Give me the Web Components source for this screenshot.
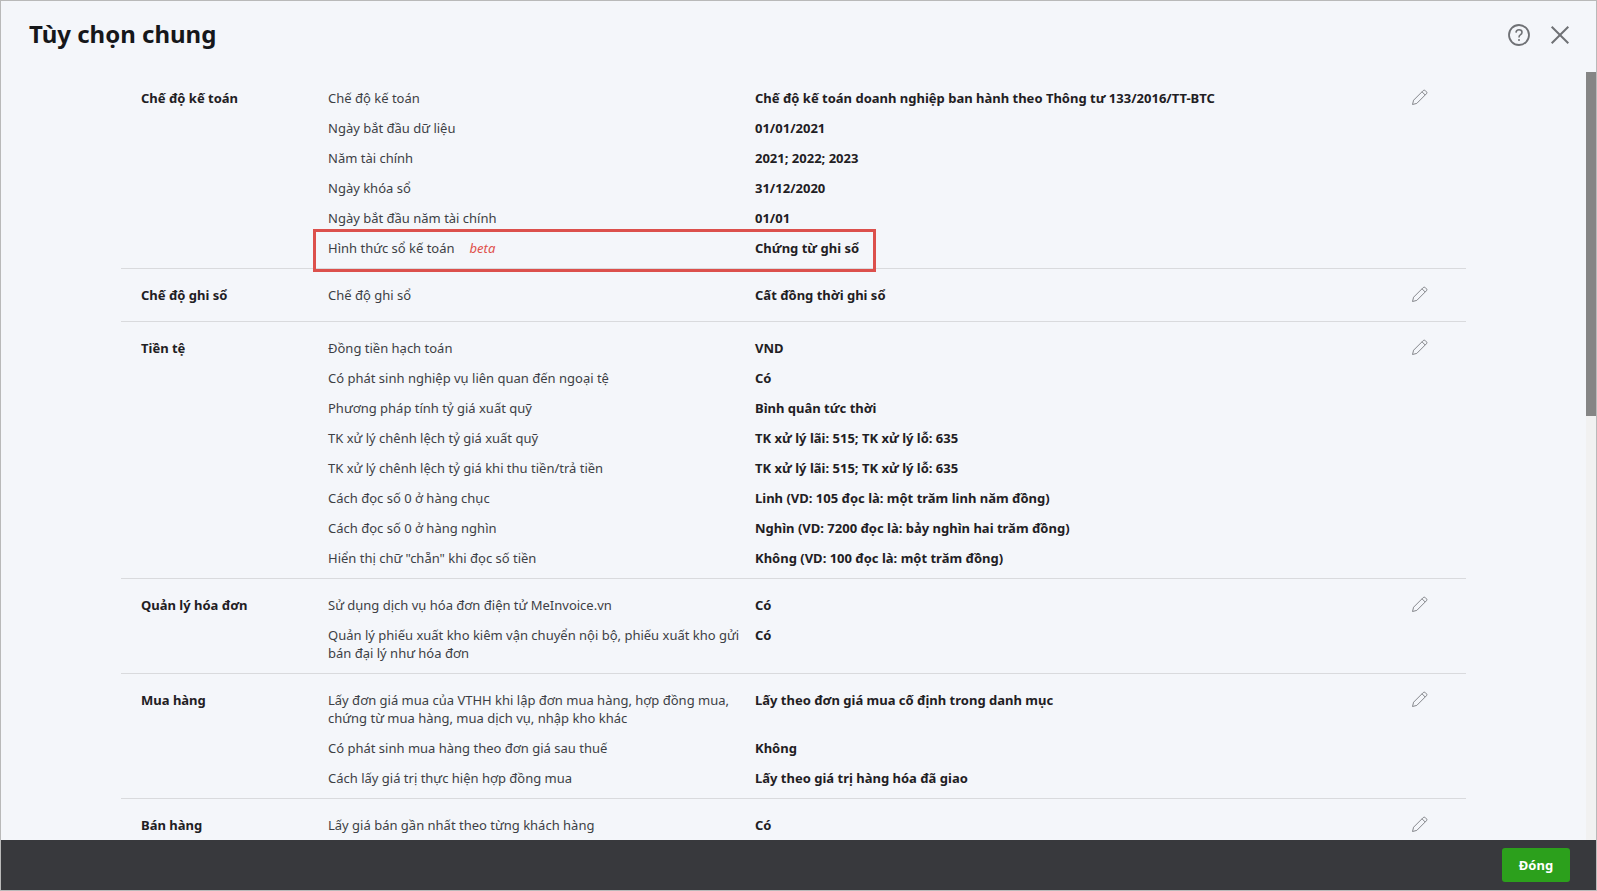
<!DOCTYPE html>
<html lang="vi">
    <head>
        <meta charset="utf-8"/>
        <title>Tùy chọn chung</title>
        <style>
            html, body { margin: 0; height: 100%; overflow: hidden; }
        </style>
    </head>
    <body>
        <option-dialog heading="Tùy chọn chung">
            <option-group name="Chế độ kế toán">
                <option-row label="Chế độ kế toán" value="Chế độ kế toán doanh nghiệp ban hành theo Thông tư 133/2016/TT-BTC"></option-row>
                <option-row label="Ngày bắt đầu dữ liệu" value="01/01/2021"></option-row>
                <option-row label="Năm tài chính" value="2021; 2022; 2023"></option-row>
                <option-row label="Ngày khóa sổ" value="31/12/2020"></option-row>
                <option-row label="Ngày bắt đầu năm tài chính" value="01/01"></option-row>
                <option-row label="Hình thức sổ kế toán" value="Chứng từ ghi sổ" note="beta" highlight></option-row>
            </option-group>
            <option-group name="Chế độ ghi sổ">
                <option-row label="Chế độ ghi sổ" value="Cất đồng thời ghi sổ"></option-row>
            </option-group>
            <option-group name="Tiền tệ">
                <option-row label="Đồng tiền hạch toán" value="VND"></option-row>
                <option-row label="Có phát sinh nghiệp vụ liên quan đến ngoại tệ" value="Có"></option-row>
                <option-row label="Phương pháp tính tỷ giá xuất quỹ" value="Bình quân tức thời"></option-row>
                <option-row label="TK xử lý chênh lệch tỷ giá xuất quỹ" value="TK xử lý lãi: 515; TK xử lý lỗ: 635"></option-row>
                <option-row label="TK xử lý chênh lệch tỷ giá khi thu tiền/trả tiền" value="TK xử lý lãi: 515; TK xử lý lỗ: 635"></option-row>
                <option-row label="Cách đọc số 0 ở hàng chục" value="Linh (VD: 105 đọc là: một trăm linh năm đồng)"></option-row>
                <option-row label="Cách đọc số 0 ở hàng nghìn" value="Nghìn (VD: 7200 đọc là: bảy nghìn hai trăm đồng)"></option-row>
                <option-row label="Hiển thị chữ &quot;chẵn&quot; khi đọc số tiền" value="Không (VD: 100 đọc là: một trăm đồng)"></option-row>
            </option-group>
            <option-group name="Quản lý hóa đơn">
                <option-row label="Sử dụng dịch vụ hóa đơn điện tử MeInvoice.vn" value="Có"></option-row>
                <option-row label="Quản lý phiếu xuất kho kiêm vận chuyển nội bộ, phiếu xuất kho gửi bán đại lý như hóa đơn" value="Có"></option-row>
            </option-group>
            <option-group name="Mua hàng">
                <option-row label="Lấy đơn giá mua của VTHH khi lập đơn mua hàng, hợp đồng mua, chứng từ mua hàng, mua dịch vụ, nhập kho khác" value="Lấy theo đơn giá mua cố định trong danh mục"></option-row>
                <option-row label="Có phát sinh mua hàng theo đơn giá sau thuế" value="Không"></option-row>
                <option-row label="Cách lấy giá trị thực hiện hợp đồng mua" value="Lấy theo giá trị hàng hóa đã giao"></option-row>
            </option-group>
            <option-group name="Bán hàng" last>
                <option-row label="Lấy giá bán gần nhất theo từng khách hàng" value="Có"></option-row>
            </option-group>
        </option-dialog>

        <script>
            class OptionRow extends HTMLElement {
                constructor() {
                    super();
                    let shadowDom = this.attachShadow({mode: 'open'});
                    const note = this.getAttribute("note");
                    shadowDom.innerHTML = `
                        <style>
                            :host {
                                display: grid;
                                grid-template-columns: 427px 1fr;
                                padding: 6px 0;
                                position: relative;
                                line-height: 18px;
                            }
                            .label { color: #3d3f45; padding-right: 12px; }
                            .note { color: #e0504b; font-style: italic; margin-left: 15px; }
                            .value { color: #1f2023; font-weight: 700; }
                            .box {
                                position: absolute;
                                left: -15px;
                                top: -4px;
                                width: 563px;
                                height: 43px;
                                box-sizing: border-box;
                                border: 3px solid #dc504c;
                            }
                        </style>
                        <div class="label"></div>
                        <div class="value"></div>
                    `;
                    const labelEl = shadowDom.querySelector(".label");
                    labelEl.textContent = this.getAttribute("label");
                    if (note) {
                        const noteEl = document.createElement("span");
                        noteEl.className = "note";
                        noteEl.textContent = note;
                        labelEl.appendChild(noteEl);
                    }
                    shadowDom.querySelector(".value").textContent = this.getAttribute("value");
                    if (this.hasAttribute("highlight")) {
                        const box = document.createElement("div");
                        box.className = "box";
                        shadowDom.appendChild(box);
                    }
                }
            }
            window.customElements.define("option-row", OptionRow);

            class OptionGroup extends HTMLElement {
                constructor() {
                    super();
                    let shadowDom = this.attachShadow({mode: 'open'});
                    shadowDom.innerHTML = `
                        <style>
                            :host {
                                display: grid;
                                grid-template-columns: 187px 1fr 55px;
                                box-sizing: border-box;
                                min-height: 53px;
                                padding: 11px 0 5px 20px;
                                border-bottom: 1px solid #d9dadd;
                            }
                            :host([last]) { border-bottom: none; }
                            .name {
                                color: #1f2023;
                                font-weight: 700;
                                line-height: 18px;
                                padding-top: 6px;
                            }
                            svg { display: block; margin-top: 5px; }
                        </style>
                        <div class="name"></div>
                        <div class="rows"><slot></slot></div>
                        <div class="edit">
                            <svg width="18" height="18" viewBox="0 0 18 18" fill="none" stroke="#85878c" stroke-width="1" stroke-linejoin="round">
                                <path d="M1.5 16.5 L2.6 12.2 L12.2 2.6 Q13 1.8 13.8 2.2 L15.8 4.2 Q16.2 5 15.4 5.8 L5.8 15.4 Z"/>
                                <path d="M11 3.8 L14.2 7"/>
                            </svg>
                        </div>
                    `;
                    shadowDom.querySelector(".name").textContent = this.getAttribute("name");
                }
            }
            window.customElements.define("option-group", OptionGroup);

            class OptionDialog extends HTMLElement {
                constructor() {
                    super();
                    let shadowDom = this.attachShadow({mode: 'open'});
                    shadowDom.innerHTML = `
                        <style>
                            :host {
                                display: flex;
                                flex-direction: column;
                                box-sizing: border-box;
                                width: 1597px;
                                height: 891px;
                                background: #f4f6fa;
                                border: 1px solid #b9b9b9;
                                font: 13px/18px "Noto Sans", "Open Sans", sans-serif;
                            }
                            header {
                                flex: none;
                                height: 71px;
                                display: flex;
                                align-items: flex-start;
                                padding: 0 25px 0 28px;
                            }
                            h1 {
                                flex: 1;
                                margin: 16px 0 0;
                                font-size: 24px;
                                line-height: 33px;
                                font-weight: 700;
                                color: #16171a;
                            }
                            header svg { display: block; margin-top: 22px; }
                            header svg + svg { margin: 23px 0 0 18px; }
                            .body { flex: 1; min-height: 0; display: flex; }
                            .content { flex: 1; min-width: 0; overflow: hidden; padding: 0 120px; }
                            .track { flex: none; width: 10px; background: #f1f1f1; }
                            .thumb { height: 344px; background: #858585; }
                            footer {
                                flex: none;
                                height: 50px;
                                display: flex;
                                justify-content: flex-end;
                                align-items: flex-start;
                                background: #38393d;
                                padding: 8px 26px 0 0;
                                box-sizing: border-box;
                            }
                            button {
                                width: 68px;
                                height: 34px;
                                border: none;
                                border-radius: 3px;
                                background: #2ca01c;
                                color: #fff;
                                font: 700 13px "Noto Sans", sans-serif;
                            }
                        </style>
                        <header>
                            <h1></h1>
                            <svg width="24" height="24" viewBox="0 0 24 24" fill="none" stroke="#6f7175" stroke-width="1.8">
                                <circle cx="12" cy="12" r="10"/>
                                <path d="M9 9.6 Q9.2 6.8 12 6.8 Q15 6.8 15 9.3 Q15 11 13.3 11.9 Q12 12.6 12 14.4" stroke-width="1.6"/>
                                <circle cx="12" cy="17" r="1" fill="#6f7175" stroke="none"/>
                            </svg>
                            <svg width="22" height="22" viewBox="0 0 22 22" fill="none" stroke="#6f7175" stroke-width="2">
                                <path d="M2.7 2.7 L19.3 19.3 M19.3 2.7 L2.7 19.3"/>
                            </svg>
                        </header>
                        <div class="body">
                            <div class="content"><slot></slot></div>
                            <div class="track"><div class="thumb"></div></div>
                        </div>
                        <footer><button>Đóng</button></footer>
                    `;
                    shadowDom.querySelector("h1").textContent = this.getAttribute("heading");
                }
            }
            window.customElements.define("option-dialog", OptionDialog);
        </script>
    </body>
</html>
